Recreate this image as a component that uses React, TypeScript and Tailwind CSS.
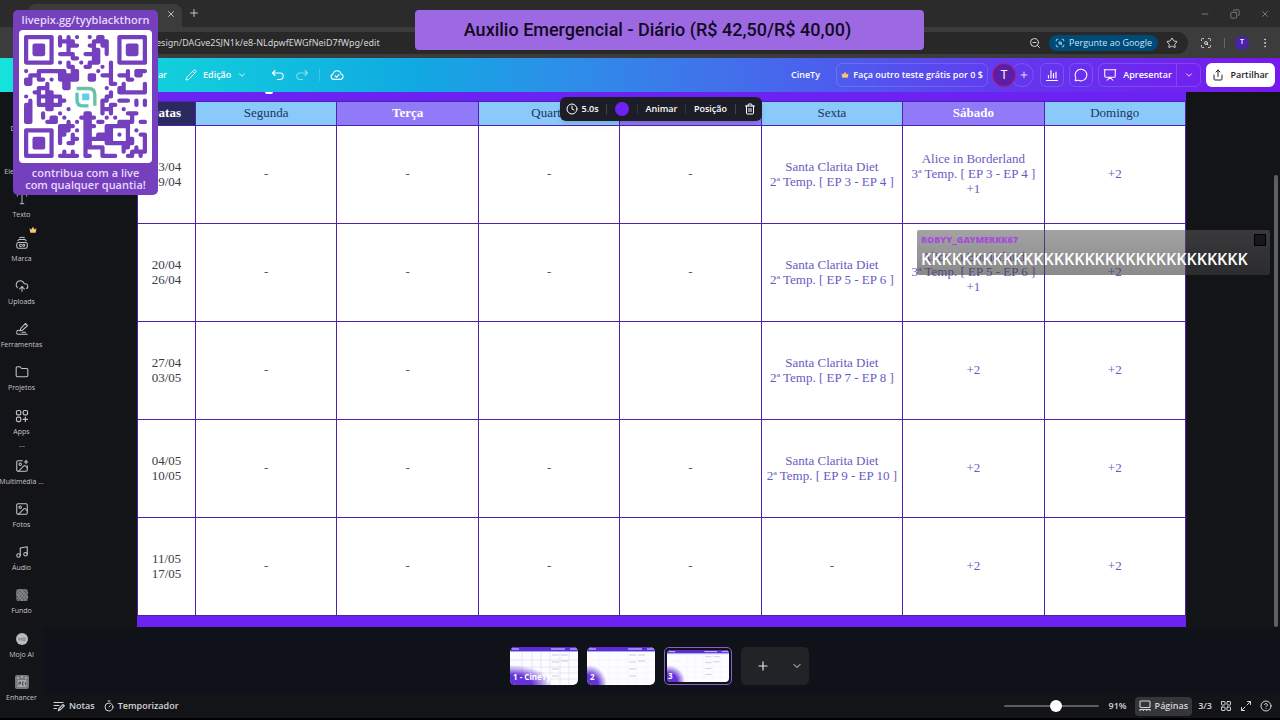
import React, { useState } from 'react';
import {
  ChevronDown,
  CircleQuestionMark,
  Clock,
  CloudUpload,
  Copy,
  EllipsisVertical,
  Folder,
  Image,
  ImagePlus,
  LayoutGrid,
  LayoutTemplate,
  Maximize2,
  MessageCircle,
  Minus,
  Music,
  Pencil,
  PenLine,
  Plus,
  Presentation,
  ScanSearch,
  Shapes,
  Share,
  Star,
  Timer,
  Trash2,
  Type,
  X,
  ZoomOut,
} from 'lucide-react';

const DAYS = ['Segunda', 'Terça', 'Quarta', 'Quinta', 'Sexta', 'Sábado', 'Domingo'];

interface Week {
  dates: string[];
  cells: string[][];
}

const WEEKS: Week[] = [
  {
    dates: ['13/04', '19/04'],
    cells: [['-'], ['-'], ['-'], ['-'], ['Santa Clarita Diet', '2ª Temp. [ EP 3 - EP 4 ]'], ['Alice in Borderland', '3ª Temp. [ EP 3 - EP 4 ]', '+1'], ['+2']],
  },
  {
    dates: ['20/04', '26/04'],
    cells: [['-'], ['-'], ['-'], ['-'], ['Santa Clarita Diet', '2ª Temp. [ EP 5 - EP 6 ]'], ['Alice in Borderland', '3ª Temp. [ EP 5 - EP 6 ]', '+1'], ['+2']],
  },
  {
    dates: ['27/04', '03/05'],
    cells: [['-'], ['-'], [], [], ['Santa Clarita Diet', '2ª Temp. [ EP 7 - EP 8 ]'], ['+2'], ['+2']],
  },
  {
    dates: ['04/05', '10/05'],
    cells: [['-'], ['-'], ['-'], ['-'], ['Santa Clarita Diet', '2ª Temp. [ EP 9 - EP 10 ]'], ['+2'], ['+2']],
  },
  {
    dates: ['11/05', '17/05'],
    cells: [['-'], ['-'], ['-'], ['-'], ['-'], ['+2'], ['+2']],
  },
];

// 29 x 29 modules, finder patterns included
const QR = [
  '#######.#.#.#..#.##...#######',
  '#.....#.####....####..#.....#',
  '#.....#.#.###..##.##..#.....#',
  '#.....#...#.....##.#..#.....#',
  '#.....#.####..####.#..#.....#',
  '#.....#....##...##....#.....#',
  '#######.#.#..#.###..#.#######',
  '..........##..##..#.#........',
  '#..#######.##....#..#...#.###',
  '.###....#####..##.###.###.##.',
  '##.##.#.#####..##...#...##...',
  '##...#...##.........##.#....#',
  '...###...##........#..##....#',
  '..##.##.............#.#######',
  '#..######..........##........',
  '.#.#.##.##........##..###.#.#',
  '##.######.........#.##....#.#',
  '##...##...#.......###..#.....',
  '##..#...#.....##..#.#...###..',
  '##..#.##.#...####..#.#...#...',
  '##...###..#.#.##.##...####.##',
  '........####..###..######....',
  '#######.###.#.##...##...#.#..',
  '#.....#.##.#..##.####.#.#..##',
  '#.....#.#..##.#######...##..#',
  '#.....#.#.##..##...#######..#',
  '#.....#.......#####....##.#.#',
  '#.....#..#.#..#...#....#.####',
  '#######.#####.##..####..##.#.',
];

// Modules are dots joined to their right and lower neighbours
const qrPath = () => {
  let d = '';
  QR.forEach((row, y) => {
    for (let x = 0; x < row.length; x++) {
      if (row[x] !== '#') continue;
      d += `M${x + 0.5} ${y + 0.5}h0.01`;
      if (row[x + 1] === '#') d += `M${x + 0.5} ${y + 0.5}h1`;
      if (QR[y + 1]?.[x] === '#') d += `M${x + 0.5} ${y + 0.5}v1`;
    }
  });
  return d;
};

const QrCode: React.FC = () => (
  <svg viewBox="0 0 29 29" className="w-full" aria-label="QR code">
    <path d={qrPath()} stroke="#7440bd" strokeWidth="1" strokeLinecap="round" fill="none" />
    {[[2, 2], [24, 2], [2, 24]].map(([x, y]) => (
      <rect key={`${x}-${y}`} x={x} y={y} width="3" height="3" rx="0.5" fill="#7440bd" />
    ))}
    <rect x="11.7" y="11.7" width="5.6" height="5.6" fill="#fff" />
    <path d="M12.5 13.6v1.8q0 1.3 1.3 1.3h1.4" stroke="#5cc4b8" strokeWidth="0.8" fill="none" />
    <path d="M12.4 12.6h2.8q1.5 0 1.5 1.5v2.6" stroke="#6dc0a8" strokeWidth="0.8" fill="none" />
    <rect x="13.7" y="13.8" width="1.7" height="1.6" rx="0.2" fill="#63cfe6" />
  </svg>
);

const Crown: React.FC<{ className?: string }> = ({ className }) => (
  <svg viewBox="0 0 16 16" className={className} fill="#fbc46d">
    <path d="M1 4.5l3.6 2.7L8 1.5l3.4 5.7L15 4.5l-1.6 9H2.6z" />
  </svg>
);

const BrandIcon: React.FC = () => (
  <svg viewBox="0 0 24 24" className="size-3.5" fill="none" stroke="currentColor" strokeWidth="1.8" strokeLinecap="round">
    <path d="M3 14q0-3 3-3h12q3 0 3 3v4q0 3-3 3H6q-3 0-3-3zM5 8q1-2 3-2h8q2 0 3 2M8 3q4-2 8 0" />
    <path d="M11 14.5q-3-1.5-3 1.5t3 1.5M15 14.2a1.8 1.8 0 1 0 .01 0" />
  </svg>
);

const AppsIcon: React.FC = () => (
  <svg viewBox="0 0 24 24" className="size-3.5" fill="none" stroke="currentColor" strokeWidth="2" strokeLinecap="round">
    <rect x="2.5" y="2.5" width="7.5" height="7.5" rx="2.5" />
    <rect x="14" y="2.5" width="7.5" height="7.5" rx="2.5" />
    <rect x="2.5" y="14" width="7.5" height="7.5" rx="2.5" />
    <path d="M17.7 14v7.5M14 17.7h7.5" />
  </svg>
);

const DrawIcon: React.FC = () => (
  <svg viewBox="0 0 24 24" className="size-3.5" fill="none" stroke="currentColor" strokeWidth="1.8" strokeLinecap="round" strokeLinejoin="round">
    <path d="M9 15l1-4 8-8.5 3.500 3.500-8.500 8zM3 16q2-3 5-1M3 18q-1 3 4 3h14M12 17.500h6" />
  </svg>
);

const PatternIcon: React.FC = () => (
  <svg viewBox="0 0 14 14" className="size-3.5">
    <rect x="1" y="1" width="12" height="12" rx="2" fill="#55565a" />
    <path
      d="M2 5l3-4M2 8l6-7M2 11l8-10M3 13l9-11M6 13l7-9M9 13l4-5M2 2l10 11M5 1l8 9M1 5l7 8"
      stroke="#a5a6a8"
      strokeWidth="0.7"
    />
  </svg>
);

const MojoIcon: React.FC = () => (
  <svg viewBox="0 0 14 14" className="size-3.5">
    <circle cx="7" cy="7" r="6" fill="#b9babb" />
    <path d="M4 8.5V6l1.3 1.5L6.6 6v2.5M8 8.5V6h2v2.5z" stroke="#77787a" strokeWidth="0.8" fill="none" />
  </svg>
);

const EnhancerIcon: React.FC = () => (
  <svg viewBox="0 0 14 14" className="size-3.5">
    <rect width="14" height="14" rx="2" fill="#77787a" />
    <path d="M2 3h2M6 2h2M10 3h2" stroke="#d0d0d0" />
    <rect x="2.5" y="5" width="9" height="7" rx="1" fill="#a5a6a8" />
    <path d="M4 10V7h1.5v1.5H4M9 7H7.5v3H9M10.5 7v3" stroke="#3e3f43" fill="none" strokeWidth="0.8" />
  </svg>
);

const ChartIcon: React.FC = () => (
  <svg viewBox="0 0 14 14" className="size-3.5" fill="none" stroke="currentColor" strokeWidth="1.2" strokeLinecap="round">
    <path d="M1.5 12.5h11M3.5 10V7.5M6 10V2.5M8.5 10V5.5M11 10V4" />
  </svg>
);

const UndoIcon: React.FC = () => (
  <svg viewBox="0 0 13 13" className="size-[13px]" fill="none" stroke="currentColor" strokeWidth="1.1" strokeLinecap="round" strokeLinejoin="round">
    <path d="M4 1.5L1.5 4 4 6.5M1.5 4H9a3 3 0 0 1 0 6.5H6.5" />
  </svg>
);

const CloudSavedIcon: React.FC = () => (
  <svg viewBox="0 0 24 24" className="size-3.5" fill="none" stroke="currentColor" strokeWidth="1.8" strokeLinecap="round" strokeLinejoin="round">
    <path d="M6.5 19.5a4.8 4.8 0 0 1-1.2-9.4 7 7 0 0 1 13.6 0 4.8 4.8 0 0 1-1.2 9.4z" />
    <path d="M8.8 13.5l2.4 2.4 4.3-4.8" />
  </svg>
);

const NotesIcon: React.FC = () => (
  <svg viewBox="0 0 12 12" className="size-3" fill="none" stroke="currentColor" strokeWidth="1.1" strokeLinecap="round">
    <path d="M1 2.5h9M1 5.5h5M1 8.5h2.5M5.5 10.5l.5-2 4-4 1.3 1.3-4 4z" />
  </svg>
);

const PagesIcon: React.FC = () => (
  <svg viewBox="0 0 12 12" className="size-3" fill="none" stroke="currentColor" strokeWidth="1.1">
    <rect x="1" y="1" width="10" height="6.5" rx="1" />
    <path d="M1 11V9.5h10V11M4.3 9.5V11M7.7 9.5V11" />
  </svg>
);

const SIDE_TOP = [
  { label: 'Design', icon: <LayoutTemplate className="size-3.5" strokeWidth={1.6} /> },
  { label: 'Elementos', icon: <Shapes className="size-3.5" strokeWidth={1.6} /> },
  { label: 'Texto', icon: <Type className="size-3.5" strokeWidth={1.6} /> },
  { label: 'Marca', icon: <BrandIcon />, crown: true },
  { label: 'Uploads', icon: <CloudUpload className="size-3.5" strokeWidth={1.8} /> },
  { label: 'Ferramentas', icon: <DrawIcon /> },
  { label: 'Projetos', icon: <Folder className="size-3.5" strokeWidth={1.8} /> },
  { label: 'Apps', icon: <AppsIcon /> },
];

const SIDE_APPS = [
  { label: 'Multimédia ...', icon: <ImagePlus className="size-3.5" strokeWidth={1.8} /> },
  { label: 'Fotos', icon: <Image className="size-3.5" strokeWidth={1.8} /> },
  { label: 'Áudio', icon: <Music className="size-3.5" strokeWidth={1.8} /> },
  { label: 'Fundo', icon: <PatternIcon /> },
  { label: 'Mojo AI', icon: <MojoIcon /> },
  { label: 'Enhancer', icon: <EnhancerIcon /> },
];

interface SideItemProps {
  label: string;
  icon: React.ReactNode;
  crown?: boolean;
}

const SideItem: React.FC<SideItemProps> = ({ label, icon, crown }) => (
  <button className="relative flex min-h-0 w-full flex-1 flex-col items-center gap-1 pt-1.5 text-[#c4c5c8]">
    {icon}
    <span className="text-[7px] leading-[10px] font-medium whitespace-nowrap">{label}</span>
    {crown && <Crown className="absolute -top-1 right-1.5 size-2" />}
  </button>
);

const BrowserChrome: React.FC = () => (
  <div className="bg-[#2b2b2b] text-[#d6d6d6]">
    <div className="flex h-[27px] items-end">
      <div className="ml-7 flex h-[23px] w-[154px] items-center justify-end rounded-t-lg bg-[#3c3c3c] pr-1.5 pb-1">
        <button aria-label="Fechar separador"><X className="size-2.5" /></button>
      </div>
      <button aria-label="Novo separador" className="mb-2 ml-1.5"><Plus className="size-3" strokeWidth={1.8} /></button>
      <div className="mb-2 ml-auto flex gap-5 pr-2.5 text-[#858585]">
        <Minus className="size-2.5" />
        <Copy className="size-2.5 -scale-x-100" />
        <X className="size-2.5" />
      </div>
    </div>
    <div className="flex h-[31px] items-center bg-[#3c3c3c] pr-[9px] pl-7">
      <div className="flex h-[22px] flex-1 items-center rounded-full bg-[#282828] pr-2.5 pl-[74px]">
        <span className="flex-1 font-['Noto_Sans',sans-serif] text-[9px]">canva.com/design/DAGve2SJN1k/e8-NLdpwfEWGfNeiD7fWpg/edit</span>
        <ZoomOut className="size-3" />
        <button className="ml-2 flex h-4 items-center gap-1 rounded-full bg-[#004a77] px-1.5 text-[9px] font-medium text-[#c2e7ff]">
          <ScanSearch className="size-2.5" />
          Pergunte ao Google
        </button>
        <Star className="ml-2 size-3" />
      </div>
      <ScanSearch className="ml-3 size-3" />
      <span className="mr-2.5 ml-3 h-2.5 w-px bg-[#666]" />
      <span className="flex size-3.5 items-center justify-center rounded-full bg-[#4a22a8] text-[7px] font-semibold text-white">T</span>
      <EllipsisVertical className="ml-2.5 size-3" />
    </div>
  </div>
);

const CanvaHeader: React.FC = () => (
  <header className="flex h-[34px] items-center bg-[linear-gradient(90deg,#15e3dc_0%,#12cbdd_15%,#10aae2_32%,#2b91e8_43%,#3f74ea_55%,#5058ee_67%,#6436ee_80%,#7718ee_100%)] pr-[5px] text-[9px] font-semibold text-white">
    <span className="w-[167px] text-right">Redimensionar</span>
    <button className="ml-[18px] flex items-center gap-1.5">
      <Pencil className="size-3" strokeWidth={1.8} />
      Edição
      <ChevronDown className="size-2.5" />
    </button>
    <button aria-label="Anular" className="ml-6"><UndoIcon /></button>
    <button aria-label="Refazer" className="ml-3 -scale-x-100 opacity-50"><UndoIcon /></button>
    <span className="mx-2.5 h-3 w-px bg-white/20" />
    <CloudSavedIcon />
    <div className="ml-auto flex items-center">
      <span className="mr-4">CineTy</span>
      <button className="flex h-6 w-[152px] items-center justify-center gap-1 rounded-md border border-white/15 whitespace-nowrap">
        <Crown className="size-2" />
        Faça outro teste grátis por 0 $
      </button>
      <span className="z-10 ml-1 flex size-6 items-center justify-center rounded-full border border-[#c01878] bg-[#5a1fa6] text-xs font-normal">T</span>
      <button aria-label="Adicionar pessoas" className="-ml-1.5 flex size-6 items-center justify-center rounded-full border border-white/15 pl-1"><Plus className="size-2.5" /></button>
      <button aria-label="Estatísticas" className="ml-1.5 flex size-6 items-center justify-center rounded-md border border-white/15"><ChartIcon /></button>
      <button aria-label="Comentários" className="ml-[5px] flex size-6 items-center justify-center rounded-md border border-white/15"><MessageCircle className="size-3.5" strokeWidth={1.8} /></button>
      <div className="ml-[5px] flex h-6 w-[103px] items-center rounded-md border border-white/15">
        <button className="flex flex-1 items-center justify-center gap-1.5"><Presentation className="size-3.5" strokeWidth={1.8} />Apresentar</button>
        <button aria-label="Mais opções" className="flex h-full w-6 items-center justify-center border-l border-white/15"><ChevronDown className="size-2.5" /></button>
      </div>
      <button className="ml-[5px] flex h-6 w-[69px] items-center justify-center gap-1.5 rounded-md bg-white text-[#222]"><Share className="size-3" />Partilhar</button>
    </div>
  </header>
);

const Schedule: React.FC = () => (
  <table className="w-full table-fixed border-collapse bg-white text-center font-['Liberation_Serif',serif] text-[13px] leading-[15px]">
    <thead>
      <tr className="h-6">
        <th className="w-[58px] border border-[#4e22ac] bg-[#2a2a60] p-0 pr-3.5 pb-0.5 text-right font-bold text-white">Datas</th>
        {DAYS.map((day, i) => (
          <th
            key={day}
            className={`border border-[#4e22ac] p-0 pb-0.5 ${i % 2 ? 'bg-[#917af8] font-bold text-white' : 'bg-[#8ac9fb] font-normal text-[#24345c]'}`}
          >
            {day}
          </th>
        ))}
      </tr>
    </thead>
    <tbody>
      {WEEKS.map((week) => (
        <tr key={week.dates[0]} className="h-[98px]">
          <td className="border border-[#4e22ac] p-0 pb-0.5 text-[#3a3a46]">
            {week.dates.map((d) => <div key={d}>{d}</div>)}
          </td>
          {week.cells.map((lines, i) => (
            <td key={i} className={`border border-[#4e22ac] p-0 pb-0.5 whitespace-nowrap ${lines[0] === '-' ? 'text-[#555568]' : 'text-[#6a5abf]'}`}>
              {lines.map((line) => <div key={line}>{line}</div>)}
            </td>
          ))}
        </tr>
      ))}
    </tbody>
  </table>
);

const FloatingToolbar: React.FC = () => (
  <div className="absolute top-[5px] left-1/2 ml-[-102px] flex h-6 w-[202px] items-center justify-between rounded-md bg-[#1d1d27] px-1.5 text-[9px] font-semibold text-white shadow-md">
    <button className="flex items-center gap-1"><Clock className="size-3" />5.0s</button>
    <span className="h-2.5 w-px bg-[#44444e]" />
    <button aria-label="Cor" className="size-3.5 rounded-full bg-[#6c22f2]" />
    <span className="h-2.5 w-px bg-[#33333d]" />
    <button>Animar</button>
    <span className="h-2.5 w-px bg-[#33333d]" />
    <button>Posição</button>
    <span className="h-2.5 w-px bg-[#44444e]" />
    <button aria-label="Eliminar"><Trash2 className="size-3" /></button>
  </div>
);

interface ThumbProps {
  label: string;
  selected?: boolean;
  grid?: boolean;
}

const Thumb: React.FC<ThumbProps> = ({ label, selected, grid }) => (
  <button className={`relative h-[38px] w-[68px] overflow-hidden rounded-[5px] ${selected ? 'border border-[#8b5fd0] p-0.5' : ''}`}>
    <svg viewBox="0 0 68 38" preserveAspectRatio="none" className="size-full rounded">
      <defs>
        <radialGradient id={`glow-${label[0]}`}>
          <stop offset="0.5" stopColor="#6532d9" />
          <stop offset="1" stopColor="#6532d9" stopOpacity="0" />
        </radialGradient>
      </defs>
      <rect width="68" height="38" fill="#fdfdff" />
      <rect width="68" height="4" fill="#6128d4" />
      <rect y="4" width="68" height="1" fill="#8fb6f4" />
      <path d="M2 2h7M41 2h14M60 2h7" stroke="#e6dcff" strokeWidth="1" />
      <path d="M12 5v33M22 5v33M31 5v33M40 5v33M50 5v33M59 5v33M0 13h68M0 20h68M0 26h68M0 32h68" stroke={grid ? '#d5cfe6' : '#f1effa'} strokeWidth="0.5" />
      <path d="M42 8h7M42 15h7M42 22h7M42 29h7M51 8h7M51 14h7" stroke="#c3bfd6" strokeWidth="0.8" />
      <ellipse cx="2" cy="38" rx={grid ? 40 : 18} ry="20" fill={`url(#glow-${label[0]})`} />
    </svg>
    <span className="absolute bottom-1 left-[3px] text-[8px] leading-[8px] font-bold text-white">{label}</span>
  </button>
);

const FooterBar: React.FC = () => {
  const [zoom, setZoom] = useState(91);
  return (
    <footer className="flex h-6 items-center pr-2 pl-2.5 text-[9px] font-semibold text-[#d3d4d6]">
      <button className="flex items-center gap-1"><NotesIcon />Notas</button>
      <button className="ml-2 flex items-center gap-[3px]"><Timer className="size-3" />Temporizador</button>
      <input
        type="range"
        min={10}
        max={155}
        value={zoom}
        onChange={(e) => setZoom(Number(e.target.value))}
        aria-label="Zoom"
        className="ml-auto h-0.5 w-[95px] appearance-none rounded bg-[#5b5c60] [&::-webkit-slider-thumb]:size-3 [&::-webkit-slider-thumb]:appearance-none [&::-webkit-slider-thumb]:rounded-full [&::-webkit-slider-thumb]:bg-white"
      />
      <span className="ml-2.5">{zoom}%</span>
      <button className="ml-2 flex h-[19px] items-center gap-1 rounded bg-[#35363a] px-1"><PagesIcon />Páginas</button>
      <span className="ml-1.5">3/3</span>
      <button aria-label="Grelha" className="ml-2"><LayoutGrid className="size-3" /></button>
      <button aria-label="Ecrã inteiro" className="ml-2"><Maximize2 className="size-3" /></button>
      <button aria-label="Ajuda" className="ml-2"><CircleQuestionMark className="size-3" /></button>
    </footer>
  );
};

// Stream widgets that float over the shared window
const StreamOverlays: React.FC = () => (
  <>
    <div className="absolute top-2.5 left-[13px] z-20 w-[145px] rounded-[5px] bg-[#7440bd] px-1.5 pt-1 pb-1 text-center text-[11px] leading-3 font-semibold whitespace-nowrap text-[#e6d9fa]">
      <div className="flex h-3 justify-center">livepix.gg/tyyblackthorn</div>
      <div className="my-1 rounded bg-white p-[5px]"><QrCode /></div>
      <div className="flex flex-col items-center">
        <span>contribua com a live</span>
        <span>com qualquer quantia!</span>
      </div>
    </div>
    <div className="absolute top-2.5 left-[415px] z-20 flex h-10 w-[509px] items-center justify-center rounded bg-[#9c69e2] pr-6 font-['Roboto',sans-serif] text-lg font-medium whitespace-nowrap text-[#120a22]">
      Auxilio Emergencial - Diário (R$ 42,50/R$ 40,00)
    </div>
    <div className="absolute top-[230px] right-2.5 z-20 h-[45px] w-[353px] rounded-xs bg-linear-to-b from-[#585858]/55 to-[#3c3c3c]/60 px-1 pt-1 whitespace-nowrap">
      <div className="flex justify-between">
        <span className="font-['Noto_Sans',sans-serif] text-[9px] leading-3 font-black text-[#a64ddb]">ROBYY_GAYMERKK67</span>
        <span className="size-3 border border-black bg-[#171717]" />
      </div>
      <p className="text-base leading-[26px] font-semibold text-white">KKKKKKKKKKKKKKKKKKKKKKKKKKKKKKKK</p>
    </div>
  </>
);

export default function App() {
  return (
    <div className="relative flex h-screen flex-col overflow-hidden border-b-2 border-black bg-[#131418] font-['Open_Sans',sans-serif]">
      <BrowserChrome />
      <CanvaHeader />
      <div className="flex min-h-0 flex-1">
        <nav className="flex w-[43px] shrink-0 flex-col pt-2 pb-1.5">
          {SIDE_TOP.map((item) => <SideItem key={item.label} {...item} />)}
          <div className="mb-1.5 h-px w-1.5 shrink-0 self-center bg-[#55565a]" />
          {SIDE_APPS.map((item) => <SideItem key={item.label} {...item} />)}
        </nav>
        <div className="flex min-w-0 flex-1 flex-col">
          <main className="relative px-[94px]">
            <div className="flex h-[9px] items-start bg-[#6c22f2] pl-32">
              <span className="h-0.5 w-2 rounded-b bg-white" />
            </div>
            <Schedule />
            <div className="h-[11px] bg-[#6c22f2]" />
            <FloatingToolbar />
            <div className="absolute top-[83px] right-0.5 bottom-0 w-1 rounded bg-[#5e5f63]" />
          </main>
          <div className="flex flex-1 items-center justify-center gap-[9px] bg-[#0f1219] pt-2.5 pr-1">
            <Thumb label="1 - CineTy" grid />
            <Thumb label="2" />
            <Thumb label="3" selected />
            <div className="flex h-[38px] w-[68px] items-center rounded-[5px] bg-[#202426] text-[#e4e4e6]">
              <button aria-label="Adicionar página" className="flex flex-1 justify-center"><Plus className="size-3.5" /></button>
              <button aria-label="Mais" className="flex w-6 justify-center"><ChevronDown className="size-3" /></button>
            </div>
          </div>
          <FooterBar />
        </div>
      </div>
      <StreamOverlays />
    </div>
  );
}
